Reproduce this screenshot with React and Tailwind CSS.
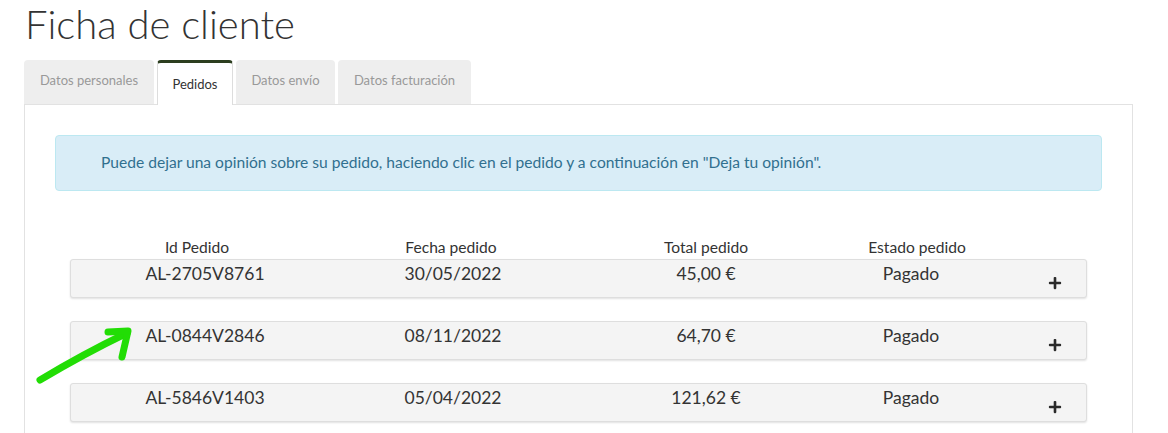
import React from "react";
import { FaPlus } from "react-icons/fa";

const orders = [
  { id: "AL-2705V8761", date: "30/05/2022", total: "45,00 €", status: "Pagado" },
  { id: "AL-0844V2846", date: "08/11/2022", total: "64,70 €", status: "Pagado" },
  { id: "AL-5846V1403", date: "05/04/2022", total: "121,62 €", status: "Pagado" },
];

export default function App() {
  return (
    <div className="relative h-[433px] overflow-hidden bg-white pl-[24px] pr-[35px] font-['Lato',sans-serif] text-[#333]">
      <h1 className="pl-[1px] text-[40px] font-light leading-[48px] text-[#333]">Ficha de cliente</h1>

      <div className="mt-[12px] flex items-end gap-[3px]">
        <div className="h-[44px] w-[130px] rounded-t-[4px] bg-[#eeeeee] pt-[12px] text-center text-[13px] leading-[16px] text-[#999]">
          Datos personales
        </div>
        <div className="relative z-10 -mb-px h-[45px] w-[76px] rounded-t-[4px] border-x border-t-[3px] border-x-[#ddd] border-t-[#2c3e1f] bg-white pt-[13px] text-center text-[13px] leading-[16px] text-[#333]">
          Pedidos
        </div>
        <div className="h-[44px] w-[99px] rounded-t-[4px] bg-[#eeeeee] pt-[12px] text-center text-[13px] leading-[16px] text-[#999]">
          Datos envío
        </div>
        <div className="h-[44px] w-[133px] rounded-t-[4px] bg-[#eeeeee] pt-[12px] text-center text-[13px] leading-[16px] text-[#999]">
          Datos facturación
        </div>
      </div>

      <div className="border border-[#e2e2e2] px-[30px] pt-[30px] pb-[40px]">
        <div className="flex h-[56px] items-center rounded-[4px] border border-[#bce8f1] bg-[#d9edf7] pl-[45px] text-[15.6px] text-[#31708f]">
          Puede dejar una opinión sobre su pedido, haciendo clic en el pedido y a continuación en "Deja tu opinión".
        </div>

        <div className="mx-[15px] mt-[47px]">
          <div className="grid grid-cols-[254px_254px_256px_166px_1fr] text-center text-[15.6px] leading-[18px] text-[#333]">
            <div>Id Pedido</div>
            <div>Fecha pedido</div>
            <div>Total pedido</div>
            <div>Estado pedido</div>
            <div></div>
          </div>

          <div className="mt-[3px] flex flex-col gap-[23px]">
            {orders.map((o) => (
              <div
                key={o.id}
                className="grid h-[39px] grid-cols-[268px_228px_278px_132px_1fr] rounded-[3px] border border-[#dedede] bg-[#f4f4f4] pt-[4px] text-center text-[17.5px] leading-[20px] text-[#333] shadow-[0_1px_2px_rgba(0,0,0,0.12)]"
              >
                <div>{o.id}</div>
                <div>{o.date}</div>
                <div>{o.total}</div>
                <div>{o.status}</div>
                <div className="flex justify-start pl-[71px] pt-[12px]">
                  <FaPlus className="h-[14px] w-[14px] text-[#2a2a2a]" />
                </div>
              </div>
            ))}
          </div>
        </div>
      </div>

      <svg
        className="pointer-events-none absolute left-0 top-0"
        width="1168"
        height="433"
        viewBox="0 0 1168 433"
      >
        <g fill="none" stroke="#22dd05" strokeWidth="7" strokeLinecap="round" strokeLinejoin="round">
          <path d="M40 380 C 70 362, 100 346, 127 333" />
          <path d="M108 332 L128 331 L122 357" />
        </g>
      </svg>
    </div>
  );
}
